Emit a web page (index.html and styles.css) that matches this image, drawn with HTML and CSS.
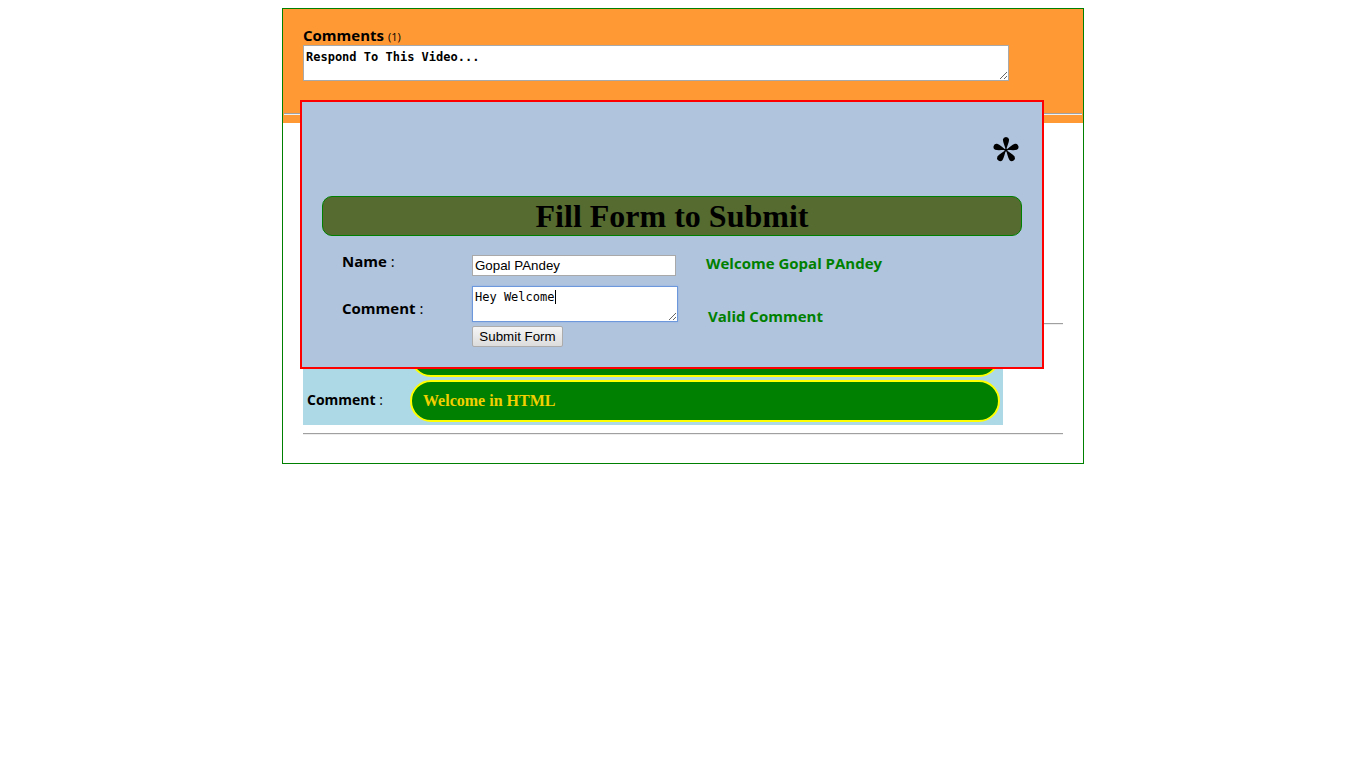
FILE: index.html
```html
<!DOCTYPE html>
<html>
<head>
<meta charset="utf-8">
<title>Comments</title>
<link rel="stylesheet" href="styles.css">
</head>
<body>
<div class="page">
  <div class="header">
    <div class="header-inner">
      <div class="comments-title"><b>Comments</b> <span class="count">(1)</span></div>
      <textarea class="respond">Respond To This Video...</textarea>
    </div>
    <hr class="header-rule">
  </div>
  <div class="content">
    <hr class="rule first-rule">
    <div class="comment-box">
      <div class="c-label"><b>Name</b> :</div>
      <div class="pill">Gopal PAndey</div>
      <div class="c-label"><b>Comment</b> :</div>
      <div class="pill">Welcome in HTML</div>
    </div>
    <hr class="rule last-rule">
  </div>

  <div class="modal">
    <div class="close-row">
      <svg class="close" width="26" height="27" viewBox="0 0 26 27" aria-label="close">
        <g transform="translate(13 14)" fill="#000">
          <path id="spoke" d="M0 0.5 C-0.7 -3 -3.1 -7.5 -3.1 -10.4 A3.15 3.15 0 0 1 3.1 -10.4 C3.1 -7.5 0.7 -3 0 0.5Z"/>
          <use href="#spoke" transform="rotate(72)"/>
          <use href="#spoke" transform="rotate(144)"/>
          <use href="#spoke" transform="rotate(216)"/>
          <use href="#spoke" transform="rotate(288)"/>
          <circle r="1.6"/>
        </g>
      </svg>
    </div>
    <div class="title-bar">Fill Form to Submit</div>
    <div class="form-grid">
      <div class="f-label name-label"><b>Name</b> :</div>
      <div class="f-field"><input class="name-input" type="text" value="Gopal PAndey"></div>
      <div class="msg name-msg">Welcome Gopal PAndey</div>

      <div class="f-label comment-label"><b>Comment</b> :</div>
      <div class="f-field">
        <div class="ta-wrap">
          <textarea class="comment-input">Hey Welcome</textarea>
          <span class="caret"></span>
        </div>
        <button class="submit" type="button">Submit Form</button>
      </div>
      <div class="msg comment-msg">Valid Comment</div>
    </div>
  </div>
</div>
</body>
</html>
```
FILE: styles.css
```css
html, body {
  margin: 0;
  padding: 0;
  background: #ffffff;
}

body {
  padding-top: 8px;
  font-family: "Open Sans", "Liberation Sans", sans-serif;
}

.page {
  position: relative;
  width: 800px;
  margin: 0 auto;
  border: 1px solid #008000;
  background: #ffffff;
}

/* ---------- header ---------- */
.header {
  background: #ff9933;
  overflow: hidden;
}

.header-inner {
  padding: 16px 20px 0 20px;
}

.comments-title {
  height: 20px;
  font-family: "Open Sans", sans-serif;
  font-size: 15px;
  line-height: 20px;
  color: #000;
}

.comments-title b {
  font-weight: 700;
}

.count {
  font-size: 11px;
  font-weight: 400;
}

.respond {
  display: block;
  box-sizing: border-box;
  width: 706px;
  height: 36px;
  margin: 0;
  padding: 4px 2px 2px 2px;
  border: 1px solid #a9a9a9;
  background: #fff;
  font-family: "DejaVu Sans Mono", monospace;
  font-size: 12px;
  font-weight: bold;
  line-height: 14px;
  color: #000;
}

.header-rule {
  margin: 32px 1px 8px 1px;
  border: 0;
  border-top: 1px solid #a0a0a0;
  border-bottom: 1px solid #f0f0f0;
  height: 0;
}

/* ---------- content under modal ---------- */
.content {
  padding: 0 20px 28px 20px;
}

.rule {
  border: 0;
  border-top: 1px solid #a0a0a0;
  border-bottom: 1px solid #eeeeee;
  height: 0;
  margin: 0;
}

.first-rule {
  margin-top: 200px;
  margin-bottom: 7px;
}

.last-rule {
  margin-top: 8px;
}

.comment-box {
  width: 700px;
  box-sizing: border-box;
  background: #add8e6;
  padding: 3px 3px 3px 4px;
  display: grid;
  grid-template-columns: 103px 1fr;
  row-gap: 3px;
  align-items: center;
}

.c-label {
  font-family: "Open Sans", sans-serif;
  font-size: 14px;
  line-height: 18px;
  color: #000;
  margin-top: -2px;
}

.c-label b {
  font-weight: 700;
}

.pill {
  box-sizing: border-box;
  height: 42px;
  border: 2px solid #ffff00;
  border-radius: 21px;
  background: #008000;
  color: #f2d000;
  font-family: "Liberation Serif", serif;
  font-weight: bold;
  font-size: 16px;
  line-height: 38px;
  padding-left: 11px;
}

/* ---------- modal ---------- */
.modal {
  position: absolute;
  left: 17px;
  top: 91px;
  box-sizing: border-box;
  width: 744px;
  height: 269px;
  border: 2px solid #ff0000;
  background: #b0c4de;
  padding: 0 20px;
}

.close-row {
  display: flex;
  justify-content: flex-end;
  align-items: flex-start;
  height: 94px;
  padding-top: 34px;
  padding-right: 3px;
  box-sizing: border-box;
}

.close {
  display: block;
}

.title-bar {
  box-sizing: border-box;
  height: 40px;
  border: 1px solid #008000;
  border-radius: 10px;
  background: #556b2f;
  font-family: "Liberation Serif", serif;
  font-weight: bold;
  font-size: 32px;
  line-height: 38px;
  text-align: center;
  color: #000;
}

.form-grid {
  margin-top: 19px;
  padding-left: 20px;
  display: grid;
  grid-template-columns: 130px 234px 1fr;
  row-gap: 10px;
  align-items: start;
}

.f-label {
  font-family: "Open Sans", sans-serif;
  font-size: 15px;
  line-height: 20px;
  color: #000;
}

.f-label b {
  font-weight: 700;
}

.name-label {
  margin-top: -4px;
}

.comment-label {
  margin-top: 12px;
}

.f-field {
  display: flex;
  flex-direction: column;
  align-items: flex-start;
}

.name-input {
  box-sizing: border-box;
  width: 204px;
  height: 21px;
  margin: 0;
  padding: 1px 2px;
  border: 1px solid #a9a9a9;
  background: #fff;
  font-family: "Liberation Sans", sans-serif;
  font-size: 13.33px;
  color: #000;
}

.ta-wrap {
  position: relative;
}

.comment-input {
  display: block;
  box-sizing: border-box;
  width: 206px;
  height: 36px;
  margin: 0;
  padding: 3px 2px 2px 2px;
  border: 1px solid #6d98dc;
  box-shadow: 0 0 2px #8fb0e6;
  outline: none;
  background: #fff;
  font-family: "DejaVu Sans Mono", monospace;
  font-size: 12px;
  line-height: 14px;
  color: #000;
}

.caret {
  position: absolute;
  left: 83px;
  top: 4px;
  width: 1px;
  height: 14px;
  background: #000;
}

.submit {
  box-sizing: border-box;
  margin-top: 4px;
  width: 91px;
  height: 21px;
  padding: 0 6px;
  border: 1px solid #acacac;
  border-radius: 2px;
  background: linear-gradient(#f5f5f5, #dcdcdc);
  font-family: "Liberation Sans", sans-serif;
  font-size: 13.33px;
  color: #000;
}

.msg {
  font-family: "Open Sans", sans-serif;
  font-weight: 700;
  font-size: 15px;
  line-height: 20px;
  color: #008000;
}

.name-msg {
  margin-top: -2px;
}

.comment-msg {
  margin-top: 20px;
  padding-left: 2px;
}
```
